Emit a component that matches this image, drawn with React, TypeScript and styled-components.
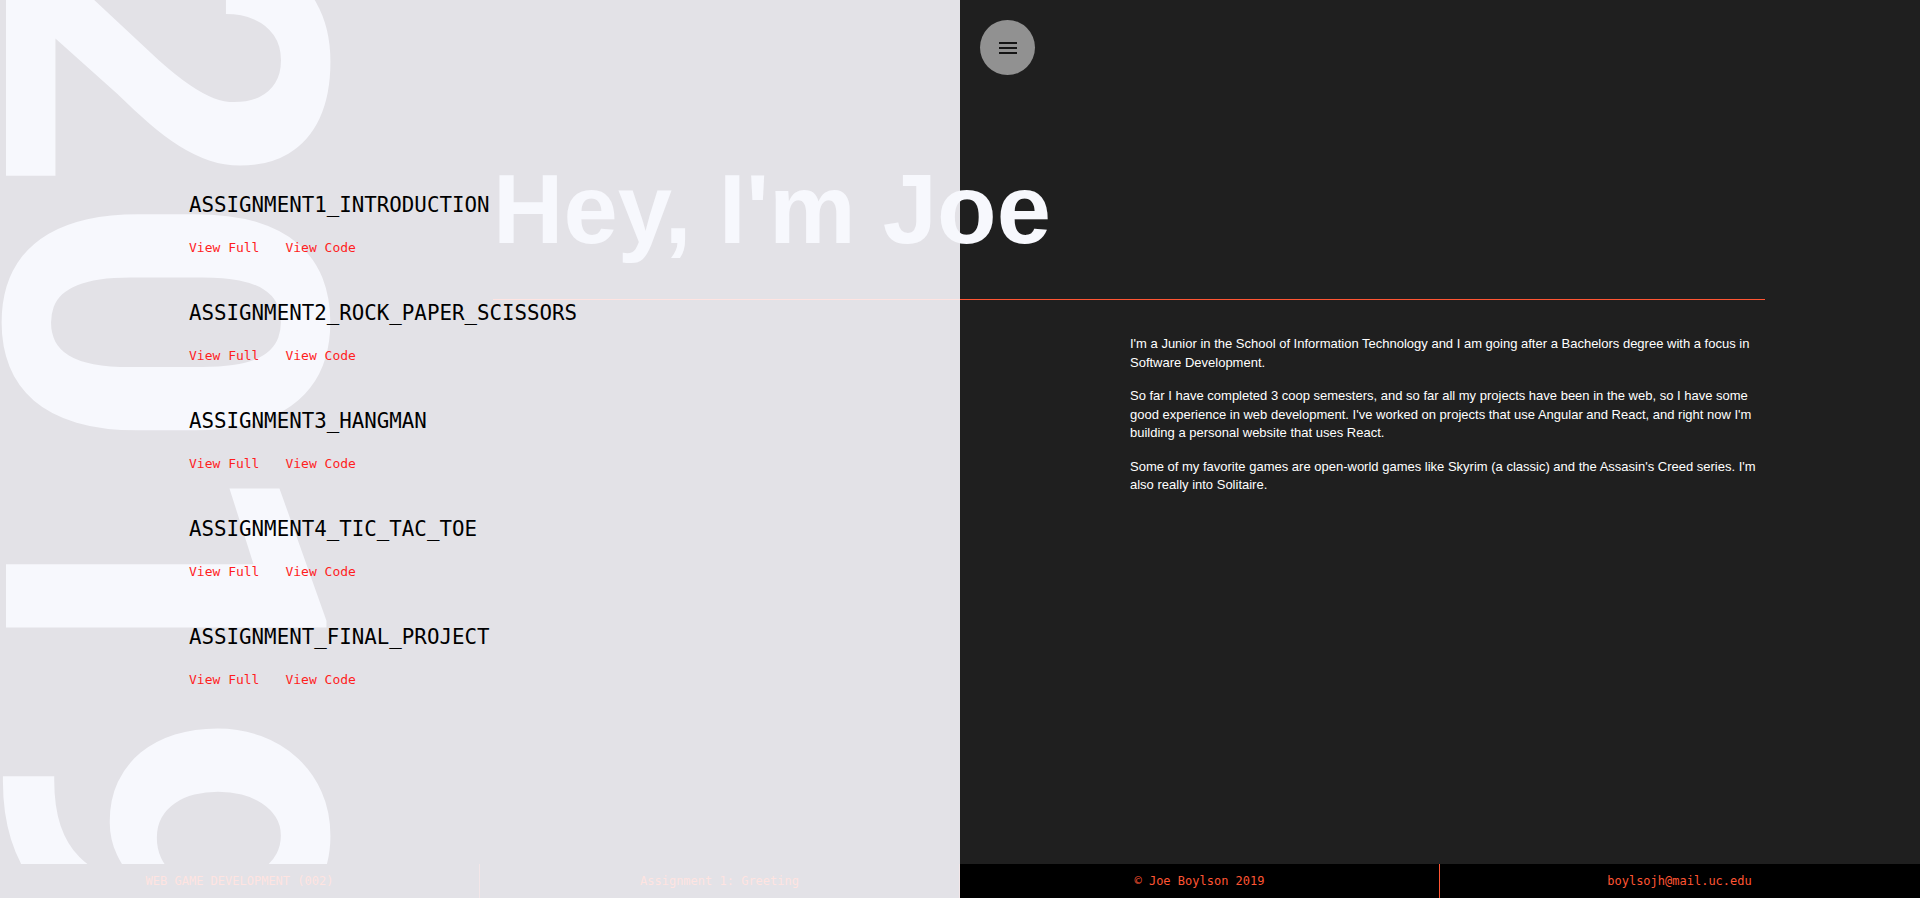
import React from "react";
import styled, { createGlobalStyle } from "styled-components";

const GlobalStyle = createGlobalStyle`
  html, body { margin: 0; padding: 0; }
  body { width: 1920px; height: 898px; overflow: hidden; font-family: "Liberation Sans", Arial, sans-serif; }
  * { box-sizing: border-box; }
`;

const Page = styled.div`
  display: grid;
  grid-template-rows: 864px 34px;
  width: 1920px;
  height: 898px;
`;

const Main = styled.main`
  display: grid;
  grid-template-columns: 960px 960px;
`;

const LeftPanel = styled.section`
  position: relative;
  isolation: isolate;
  overflow: hidden;
  background: #e3e2e7;
  padding: 193px 0 0 189px;
`;

const BigYear = styled.div`
  position: absolute;
  left: 384px;
  top: -65px;
  z-index: 0;
  font-family: Roboto, "Noto Sans", sans-serif;
  font-weight: 700;
  font-size: 450px;
  line-height: 1;
  color: #f7f8fd;
  white-space: nowrap;
  transform: rotate(90deg);
  transform-origin: top left;
  user-select: none;
`;

const List = styled.ul`
  position: relative;
  z-index: 1;
  list-style: none;
  margin: 0;
  padding: 0;
  display: flex;
  flex-direction: column;
  gap: 45.5px;
`;

const Item = styled.li`
  display: flex;
  flex-direction: column;
  gap: 22.5px;
`;

const Title = styled.h2`
  margin: 0;
  font-family: "DejaVu Sans Mono", "Liberation Mono", monospace;
  font-weight: 400;
  font-size: 20.8px;
  line-height: 24px;
  color: #000;
`;

const Links = styled.div`
  display: flex;
  gap: 26px;
`;

const LinkA = styled.a`
  font-family: "DejaVu Sans Mono", "Liberation Mono", monospace;
  font-size: 13px;
  line-height: 16px;
  color: #ff1e1e;
  text-decoration: none;
`;

const RightPanel = styled.section`
  position: relative;
  background: #1f1f1f;
  padding: 162px 155px 0 170px;
  display: flex;
  flex-direction: column;
`;

const MenuButton = styled.button`
  position: absolute;
  left: 20px;
  top: 20px;
  width: 55px;
  height: 55px;
  border-radius: 50%;
  border: none;
  padding: 0;
  background: #919191;
  display: flex;
  align-items: center;
  justify-content: center;
  color: #141414;
  cursor: pointer;
`;

const Heading = styled.h1`
  position: relative;
  margin: 0 0 0 -637px;
  padding: 0 0 42px 0;
  font-family: "Liberation Sans", Arial, sans-serif;
  font-weight: 700;
  font-size: 97.5px;
  line-height: 96px;
  color: #f7f8fd;
  white-space: nowrap;

  &::after {
    content: "";
    position: absolute;
    left: 0;
    right: 0;
    bottom: 0;
    height: 1px;
    background: linear-gradient(to right, #ffe4e1 0, #ffe4e1 467px, #ff5533 467px, #ff5533 100%);
  }
`;

const Bio = styled.div`
  margin-top: 35px;
  display: flex;
  flex-direction: column;
  gap: 15px;
`;

const Para = styled.p`
  margin: 0;
  font-family: "Liberation Sans", Arial, sans-serif;
  font-size: 13px;
  line-height: 18.5px;
  color: #ffffff;
`;

const Footer = styled.footer`
  display: grid;
  grid-template-columns: repeat(4, 480px);
`;

const FooterCell = styled.div<{ $dark?: boolean; $last?: boolean }>`
  display: flex;
  align-items: center;
  justify-content: center;
  background: ${(p) => (p.$dark ? "#000000" : "#e3e2e7")};
  color: ${(p) => (p.$dark ? "#ff5533" : "#ffe4e1")};
  border-right: 1px solid ${(p) => (p.$last ? "transparent" : p.$dark ? "#ff5533" : "#f3e6e8")};
  font-family: "DejaVu Sans Mono", "Liberation Mono", monospace;
  font-size: 12px;
  white-space: nowrap;
`;

const assignments = [
  "ASSIGNMENT1_INTRODUCTION",
  "ASSIGNMENT2_ROCK_PAPER_SCISSORS",
  "ASSIGNMENT3_HANGMAN",
  "ASSIGNMENT4_TIC_TAC_TOE",
  "ASSIGNMENT_FINAL_PROJECT",
];

export default function App() {
  return (
    <>
      <GlobalStyle />
      <Page>
        <Main>
          <LeftPanel>
            <BigYear aria-hidden>2019</BigYear>
            <List>
              {assignments.map((a) => (
                <Item key={a}>
                  <Title>{a}</Title>
                  <Links>
                    <LinkA href="#">View Full</LinkA>
                    <LinkA href="#">View Code</LinkA>
                  </Links>
                </Item>
              ))}
            </List>
          </LeftPanel>
          <RightPanel>
            <MenuButton aria-label="menu">
              <svg width="24" height="24" viewBox="0 0 24 24" fill="currentColor">
                <path d="M3 18h18v-2H3v2zm0-5h18v-2H3v2zm0-7v2h18V6H3z" />
              </svg>
            </MenuButton>
            <Heading>Hey, I'm Joe</Heading>
            <Bio>
              <Para>
                I'm a Junior in the School of Information Technology and I am going after a Bachelors degree with a
                focus in Software Development.
              </Para>
              <Para>
                So far I have completed 3 coop semesters, and so far all my projects have been in the web, so I have
                some good experience in web development. I've worked on projects that use Angular and React, and right
                now I'm building a personal website that uses React.
              </Para>
              <Para>
                Some of my favorite games are open-world games like Skyrim (a classic) and the Assasin's Creed series.
                I'm also really into Solitaire.
              </Para>
            </Bio>
          </RightPanel>
        </Main>
        <Footer>
          <FooterCell>WEB GAME DEVELOPMENT (002)</FooterCell>
          <FooterCell>Assignment 1: Greeting</FooterCell>
          <FooterCell $dark>© Joe Boylson 2019</FooterCell>
          <FooterCell $dark $last>boylsojh@mail.uc.edu</FooterCell>
        </Footer>
      </Page>
    </>
  );
}
